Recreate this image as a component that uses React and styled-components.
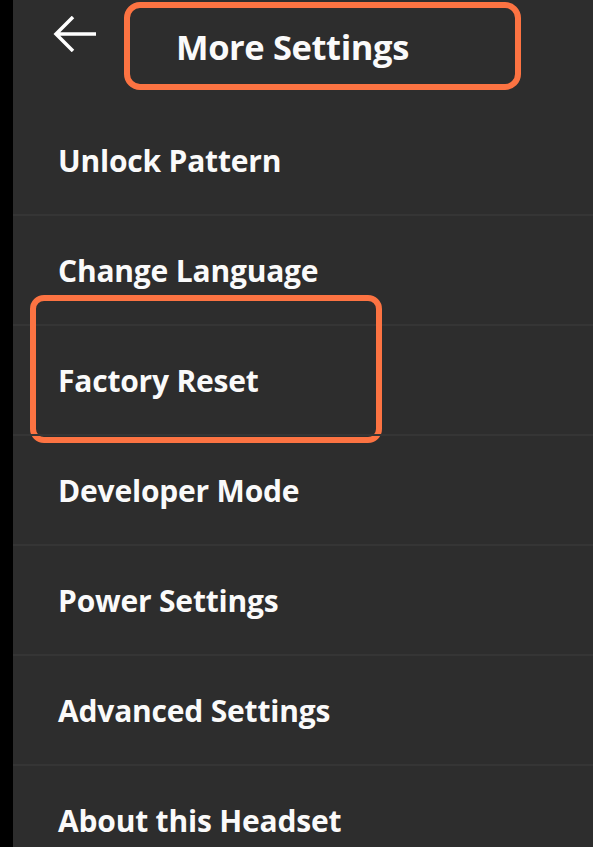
import React from 'react';
import styled, { createGlobalStyle } from 'styled-components';

const GlobalStyle = createGlobalStyle`
  html, body {
    margin: 0;
    padding: 0;
    background: #000;
    height: 100%;
    overflow: hidden;
  }
`;

const Screen = styled.div`
  display: flex;
  flex-direction: row;
  width: 593px;
  height: 847px;
  background: #000;
  font-family: 'Open Sans', 'Noto Sans', sans-serif;
  color: #fafafa;
  overflow: hidden;
`;

const Panel = styled.div`
  flex: 1;
  margin-left: 13px;
  background: #2d2d2d;
  display: flex;
  flex-direction: column;
`;

const Header = styled.div`
  flex-shrink: 0;
  display: flex;
  flex-direction: row;
  align-items: flex-start;
  height: 104px;
  padding-top: 2px;
  box-sizing: border-box;
`;

const BackButton = styled.div`
  width: 44px;
  height: 36px;
  margin: 14px 0 0 40px;
  display: flex;
  align-items: center;
  justify-content: center;
`;

const TitleBox = styled.div`
  width: 397px;
  height: 88px;
  margin-left: 27px;
  box-sizing: border-box;
  border: 6px solid #fc7342;
  border-radius: 16px;
  display: flex;
  align-items: center;
  padding-left: 46px;
`;

const Title = styled.h1`
  margin: 0;
  font-size: 34.5px;
  font-weight: 700;
  letter-spacing: -0.4px;
`;

const List = styled.div`
  flex-shrink: 0;
  display: flex;
  flex-direction: column;
`;

const Item = styled.div`
  position: relative;
  flex-shrink: 0;
  height: 108px;
  display: flex;
  align-items: center;
  padding-left: 45px;
  border-top: 2px solid #353535;

  &:first-child {
    border-top-color: transparent;
  }
`;

const Label = styled.span`
  font-size: 30px;
  font-weight: 700;
  letter-spacing: -0.2px;
`;

const Highlight = styled.div`
  position: absolute;
  left: 17px;
  top: -31px;
  width: 352px;
  height: 148px;
  box-sizing: border-box;
  border: 6px solid #fc7342;
  border-radius: 14px;
  pointer-events: none;
`;

const BackArrow = () => (
  <svg width="44" height="36" viewBox="0 0 44 36" fill="none">
    <path
      d="M43 18H3M20 1L3 18l17 17"
      stroke="#fff"
      strokeWidth="3.5"
      strokeLinejoin="miter"
    />
  </svg>
);

const items = [
  { label: 'Unlock Pattern' },
  { label: 'Change Language' },
  { label: 'Factory Reset', highlighted: true },
  { label: 'Developer Mode' },
  { label: 'Power Settings' },
  { label: 'Advanced Settings' },
  { label: 'About this Headset' },
];

const App = () => (
  <>
    <GlobalStyle />
    <Screen>
      <Panel>
        <Header>
          <BackButton>
            <BackArrow />
          </BackButton>
          <TitleBox>
            <Title>More Settings</Title>
          </TitleBox>
        </Header>
        <List>
          {items.map((item) => (
            <Item key={item.label}>
              <Label>{item.label}</Label>
              {item.highlighted && <Highlight />}
            </Item>
          ))}
        </List>
      </Panel>
    </Screen>
  </>
);

export default App;
